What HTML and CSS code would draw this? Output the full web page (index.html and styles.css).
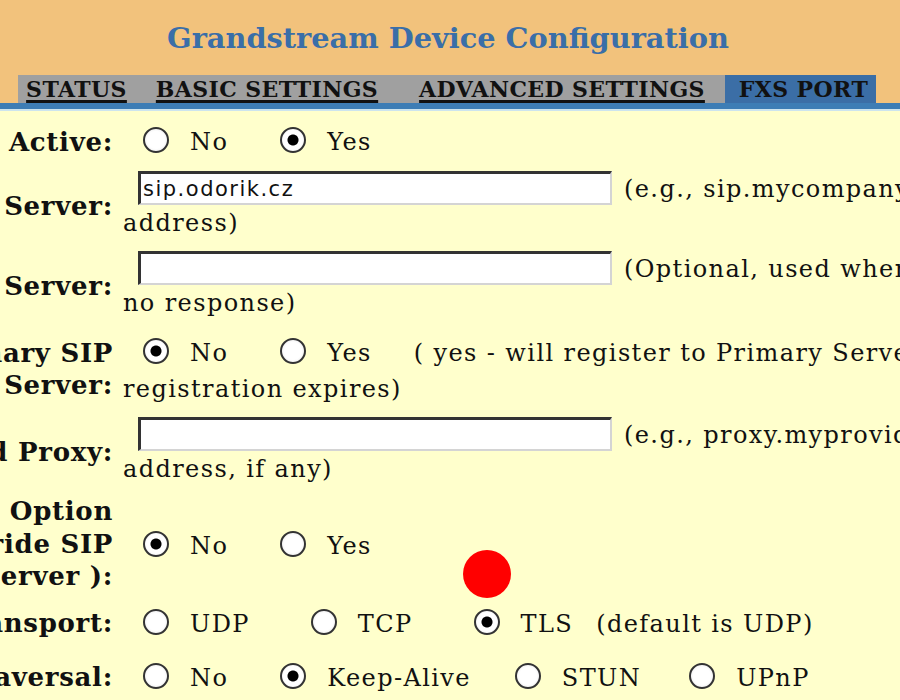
FILE: index.html
```html
<!DOCTYPE html>
<html>
<head>
<meta charset="utf-8">
<title>Grandstream Device Configuration</title>
<link rel="stylesheet" href="styles.css">
</head>
<body>
<div class="header">
  <h1 class="title">Grandstream Device Configuration</h1>
  <nav class="tabs">
    <a class="tab t1" href="#">STATUS</a>
    <a class="tab t2" href="#">BASIC SETTINGS</a>
    <a class="tab t3" href="#">ADVANCED SETTINGS</a>
    <a class="tab t4 active" href="#">FXS PORT</a>
  </nav>
</div>
<div class="rule"></div>
<div class="content">
  <div class="form">
    <div class="row">
      <div class="label">Account Active:</div>
      <div class="value radios">
        <label class="opt"><input type="radio" name="active">No</label><label class="opt"><input type="radio" name="active" checked>Yes</label>
      </div>
    </div>
    <div class="row field first-field">
      <div class="label">Primary SIP Server:</div>
      <div class="value"><div class="line1"><input class="text" type="text" value="sip.odorik.cz"><span class="hint">(e.g., sip.mycompany.com, or IP</span></div><div class="line2">address)</div></div>
    </div>
    <div class="row field">
      <div class="label">Failover SIP Server:</div>
      <div class="value"><div class="line1"><input class="text" type="text" value=""><span class="hint">(Optional, used when primary server</span></div><div class="line2">no response)</div></div>
    </div>
    <div class="row">
      <div class="label">Prefer Primary SIP<br>Server:</div>
      <div class="value">
        <div class="radios"><label class="opt"><input type="radio" name="prefer" checked>No</label><label class="opt pre-note"><input type="radio" name="prefer">Yes</label><span class="note">( yes - will register to Primary Server if failover</span></div>
        <div>registration expires)</div>
      </div>
    </div>
    <div class="row field">
      <div class="label">Outbound Proxy:</div>
      <div class="value"><div class="line1"><input class="text" type="text" value=""><span class="hint">(e.g., proxy.myprovider.com, or IP</span></div><div class="line2">address, if any)</div></div>
    </div>
    <div class="row pulled">
      <div class="label">Option<br>120 (override SIP<br>server ):</div>
      <div class="value radios">
        <label class="opt"><input type="radio" name="dhcp" checked>No</label><label class="opt"><input type="radio" name="dhcp">Yes</label>
      </div>
    </div>
    <div class="row after-pulled">
      <div class="label">SIP Transport:</div>
      <div class="value radios">
        <label class="opt wide"><input type="radio" name="tr">UDP</label><label class="opt wide"><input type="radio" name="tr">TCP</label><label class="opt last"><input type="radio" name="tr" checked>TLS</label><span class="default">(default is UDP)</span>
      </div>
    </div>
    <div class="row">
      <div class="label">NAT Traversal:</div>
      <div class="value radios">
        <label class="opt"><input type="radio" name="nat">No</label><label class="opt narrow"><input type="radio" name="nat" checked>Keep-Alive</label><label class="opt narrow2"><input type="radio" name="nat">STUN</label><label class="opt"><input type="radio" name="nat">UPnP</label>
      </div>
    </div>
  </div>
  <span class="click-dot"></span>
</div>
</body>
</html>
```
FILE: styles.css
```css
html, body {
  margin: 0;
  padding: 0;
  background: #ffffcc;
  overflow: hidden;
}
body {
  font-family: "DejaVu Serif", serif;
  color: #111;
  width: 900px;
  height: 700px;
}
.header {
  background: #f2c27c;
  height: 103px;
  display: flex;
  flex-direction: column;
}
.title {
  margin: 0;
  height: 75px;
  display: flex;
  align-items: center;
  justify-content: center;
  font-size: 28.8px;
  font-weight: bold;
  color: #3a6ea8;
  padding-right: 4px;
}
.tabs {
  display: flex;
  margin-left: 18px;
  height: 28px;
}
.tab {
  display: flex;
  align-items: center;
  justify-content: center;
  background: #a0a0a0;
  color: #111;
  font-weight: bold;
  font-size: 22px;
  letter-spacing: 0.4px;
  text-decoration: underline;
  text-decoration-thickness: 3px;
  text-underline-offset: 3px;
}
.t1 { width: 117px; }
.t2 { width: 264px; }
.t3 { width: 326px; }
.t4 { width: 151px; text-decoration: none; padding-left: 6px; box-sizing: border-box; }
.tab.active { background: #3b6ea6; }
.rule {
  height: 6px;
  background: #3d7db5;
  border-bottom: 2px solid #cde4ee;
}
.content {
  position: relative;
  overflow: hidden;
  height: 589px;
}
.form {
  display: flex;
  flex-direction: column;
  gap: 14px;
  margin-left: -247px;
  padding-top: 11px;
  font-size: 24px;
  line-height: 32px;
  letter-spacing: 1.4px;
  white-space: nowrap;
}
.row {
  display: flex;
  align-items: center;
}
.row.first-field { margin-top: -3px; }
.row.pulled { margin-top: -4px; }
.row.pulled .value { margin-top: 4px; }
.row.after-pulled { margin-top: -3px; }
.field .line1 { margin-top: -2px; }
.field .line2 { margin-top: 2px; }
.label {
  flex: none;
  width: 360px;
  margin-right: 10px;
  text-align: right;
  font-weight: bold;
  font-size: 26px;
  line-height: 32.5px;
  letter-spacing: 0.7px;
}
.value {
  flex: none;
}
.radios {
  line-height: 40px;
}
.text {
  box-sizing: border-box;
  width: 474px;
  height: 34px;
  margin: 0 12px 0 15px;
  vertical-align: 1px;
  border: 2px solid #d4d4d4;
  border-top: 3px solid #333;
  border-left: 3px solid #333;
  background: #fff;
  font-family: "DejaVu Sans", sans-serif;
  font-size: 21px;
  letter-spacing: 1.5px;
  padding: 0 2px;
  color: #111;
}
.opt {
  margin-right: 32px;
}
.opt.wide { margin-right: 41px; }
.opt.narrow { margin-right: 24px; }
.opt.narrow2 { margin-right: 28px; }
.opt.last { margin-right: 23px; }
.opt.pre-note { margin-right: 42px; }
.opt input {
  -webkit-appearance: none;
  appearance: none;
  box-sizing: border-box;
  width: 26px;
  height: 26px;
  margin: 0 21px 0 20px;
  vertical-align: -3px;
  border-radius: 50%;
  border: 2px solid #333;
  background: radial-gradient(circle at 50% 50%, #fff 55%, #e2e2e2 100%);
}
.opt input:checked {
  background: radial-gradient(circle at 50% 50%, #000 0, #000 5px, #fff 6px, #fff 60%, #e2e2e2 100%);
}
.click-dot {
  position: absolute;
  left: 463px;
  top: 439px;
  width: 48px;
  height: 48px;
  border-radius: 50%;
  background: #ff0000;
}
```
